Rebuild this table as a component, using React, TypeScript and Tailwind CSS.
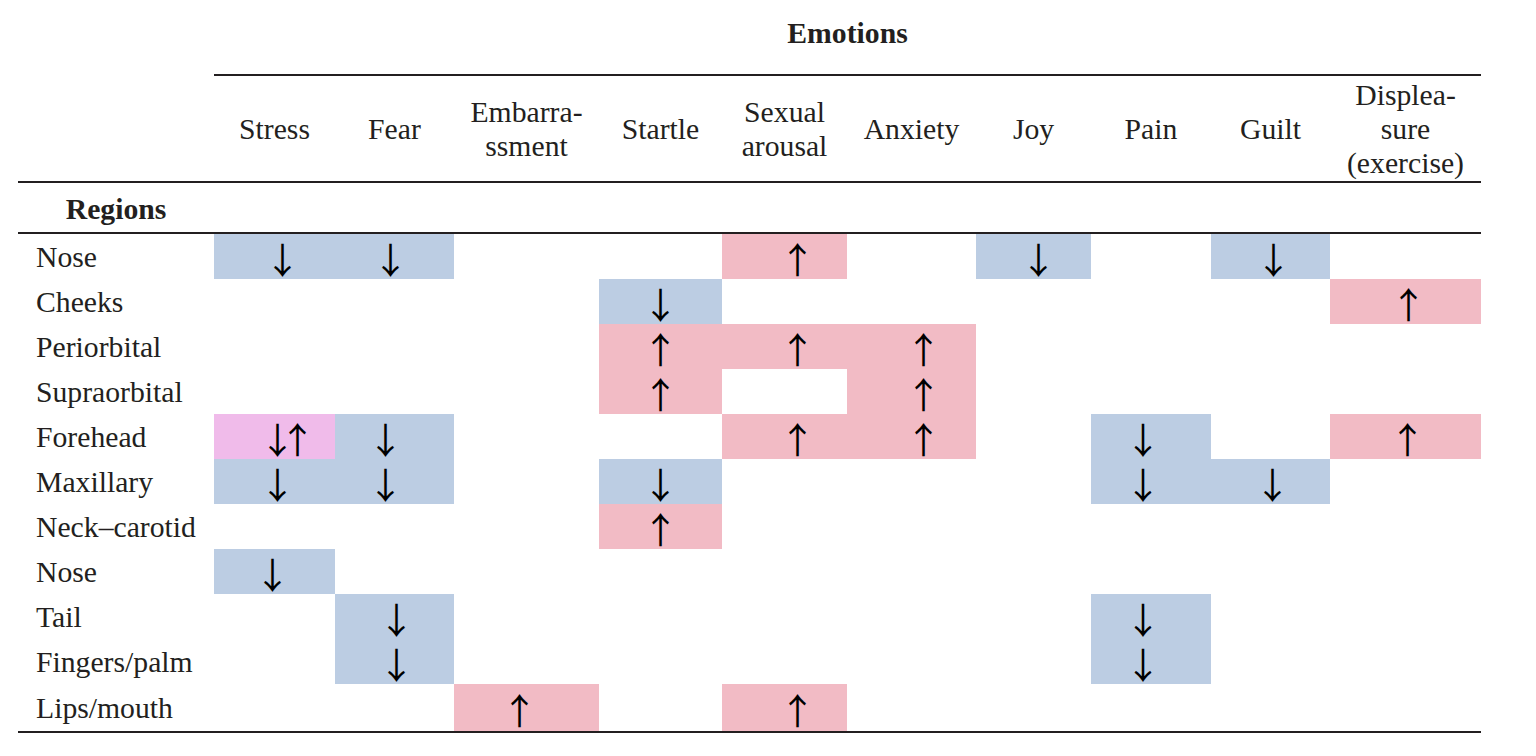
import React from "react";

type Kind = "b" | "p" | "m";
type Cell = { v: string; c: Kind; dx: string } | null;

const B = (dx = ""): Cell => ({ v: "↓", c: "b", dx });
const P = (dx = ""): Cell => ({ v: "↑", c: "p", dx });

const headers: string[][] = [
  ["Stress"],
  ["Fear"],
  ["Embarra-", "ssment"],
  ["Startle"],
  ["Sexual", "arousal"],
  ["Anxiety"],
  ["Joy"],
  ["Pain"],
  ["Guilt"],
  ["Displea-", "sure", "(exercise)"],
];

const SX = "translate-x-[13px]";
const AX = "translate-x-[12px]";
const PX = "-translate-x-[8px]";

const rows: { label: string; cells: Cell[] }[] = [
  {
    label: "Nose",
    cells: [B("translate-x-[8px]"), B("-translate-x-[4px]"), null, null, P(SX), null, B("translate-x-[5px]"), null, B("translate-x-[3px]"), null],
  },
  { label: "Cheeks", cells: [null, null, null, B(), null, null, null, null, null, P("translate-x-[3px]")] },
  { label: "Periorbital", cells: [null, null, null, P(), P(SX), P(AX), null, null, null, null] },
  { label: "Supraorbital", cells: [null, null, null, P(), null, P(AX), null, null, null, null] },
  {
    label: "Forehead",
    cells: [
      { v: "↓↑", c: "m", dx: "translate-x-[5px]" },
      B("-translate-x-[9px]"),
      null,
      null,
      P(SX),
      P(AX),
      null,
      B(PX),
      null,
      P("translate-x-[2px]"),
    ],
  },
  {
    label: "Maxillary",
    cells: [B("translate-x-[3px]"), B("-translate-x-[9px]"), null, B(), null, null, null, B(PX), B("translate-x-[2px]"), null],
  },
  { label: "Neck–carotid", cells: [null, null, null, P(), null, null, null, null, null, null] },
  { label: "Nose", cells: [B("-translate-x-[2px]"), null, null, null, null, null, null, null, null, null] },
  { label: "Tail", cells: [null, B("translate-x-[2px]"), null, null, null, null, null, B(PX), null, null] },
  { label: "Fingers/palm", cells: [null, B("translate-x-[2px]"), null, null, null, null, null, B(PX), null, null] },
  { label: "Lips/mouth", cells: [null, null, P("-translate-x-[7px]"), null, P(SX), null, null, null, null, null] },
];

const cols = "grid grid-cols-[196px_121px_119px_145px_123px_125px_129px_115px_120px_119px_151px]";

const bg = (c: Kind) =>
  c === "b" ? "bg-[#bccde3]" : c === "p" ? "bg-[#f2bbc5]" : "bg-[#f0bbea]";

export default function App() {
  return (
    <div
      className="w-[1536px] h-[756px] bg-white text-[#231f20] text-[29.7px] leading-[34px] overflow-hidden"
      style={{ fontFamily: '"Liberation Serif", "Times New Roman", serif' }}
    >
      <div className="ml-[18px] w-[1463px]">
        {/* Emotions title */}
        <div className={cols + " h-[74px]"}>
          <div />
          <div className="col-span-10 flex items-center justify-center font-bold pb-[8px]">Emotions</div>
        </div>
        <div className={cols}>
          <div />
          <div className="col-span-10 h-[2px] bg-[#231f20]" />
        </div>
        {/* Column headers */}
        <div className={cols + " h-[105px]"}>
          <div />
          {headers.map((h, i) => (
            <div key={i} className="flex flex-col items-center justify-center text-center">
              {h.map((l, j) => (
                <span key={j}>{l}</span>
              ))}
            </div>
          ))}
        </div>
        <div className="h-[2px] bg-[#231f20]" />
        {/* Regions row */}
        <div className={cols + " h-[49px]"}>
          <div className="flex items-center justify-center font-bold pt-[2px]">Regions</div>
        </div>
        <div className="h-[2px] bg-[#231f20]" />
        {/* Data rows */}
        {rows.map((r, i) => (
          <div key={i} className={cols + (i === rows.length - 1 ? " h-[47px]" : " h-[45px]")}>
            <div className="flex items-center pl-[18px]">{r.label}</div>
            {r.cells.map((c, j) => (
              <div key={j} className={"flex items-center justify-center " + (c ? bg(c.c) : "")}>
                {c ? (
                  <div className={"pt-[2px] " + c.dx}>
                    <span
                      className={
                        "block text-[36px] leading-[36px] text-black " +
                        (c.v.length > 1 ? "tracking-[-16px]" : "")
                      }
                      style={{ fontFamily: '"Noto Sans CJK JP", sans-serif' }}
                    >
                      {c.v}
                    </span>
                  </div>
                ) : null}
              </div>
            ))}
          </div>
        ))}
        <div className="h-[2px] bg-[#231f20]" />
      </div>
    </div>
  );
}
